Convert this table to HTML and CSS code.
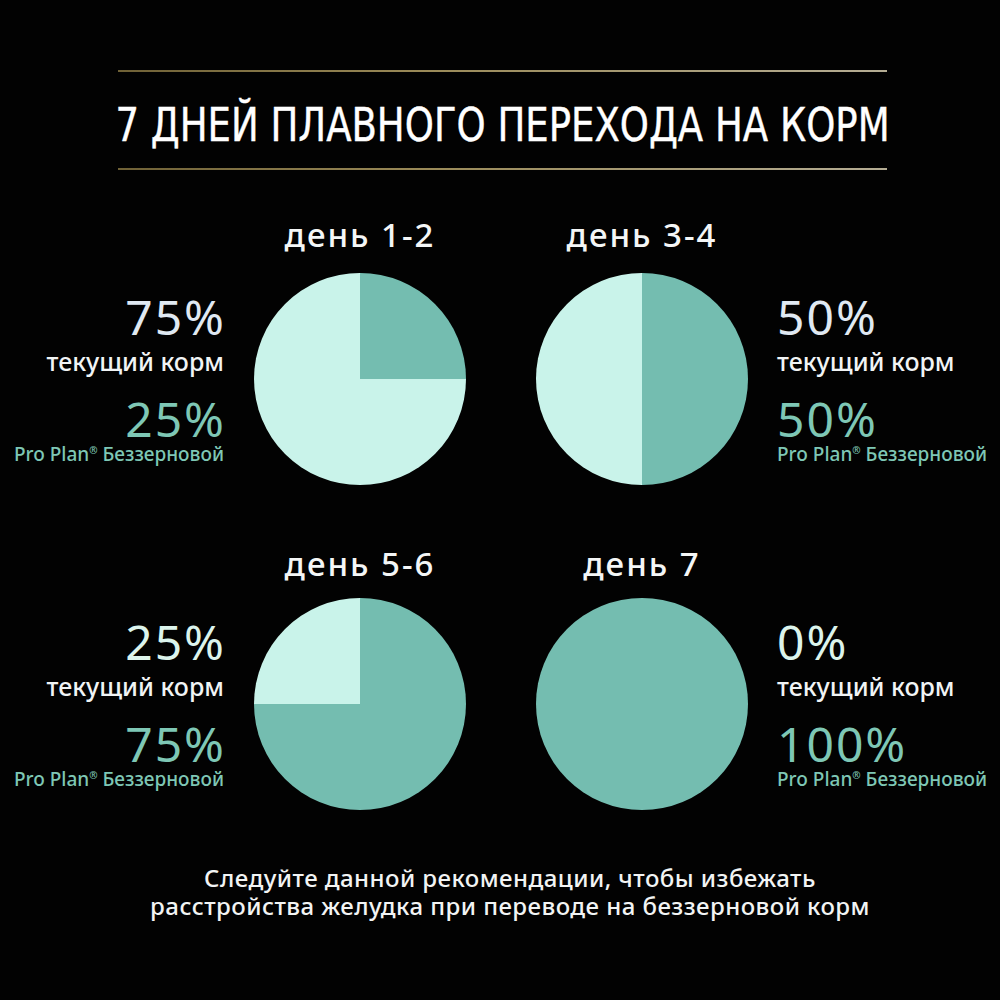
FILE: index.html
```html
<!DOCTYPE html>
<html lang="ru">
<head>
<meta charset="utf-8">
<link rel="stylesheet" href="styles.css">
</head>
<body>
<main class="page">
  <header class="header">
    <h1 class="title">7 ДНЕЙ ПЛАВНОГО ПЕРЕХОДА НА КОРМ</h1>
  </header>

  <section class="row row-first">
    <div class="label l1">день 1-2</div>
    <div class="label l2">день 3-4</div>
    <div class="info info-left t1">
      <div class="pct pct-cur">75%</div>
      <div class="cap-cur">текущий корм</div>
      <div class="pct pct-new">25%</div>
      <div class="cap-new">Pro Plan<sup>®</sup> Беззерновой</div>
    </div>
    <div class="pie p1" style="--p:25%"></div>
    <div class="pie p2" style="--p:50%"></div>
    <div class="info info-right t2">
      <div class="pct pct-cur">50%</div>
      <div class="cap-cur">текущий корм</div>
      <div class="pct pct-new">50%</div>
      <div class="cap-new">Pro Plan<sup>®</sup> Беззерновой</div>
    </div>
  </section>

  <section class="row row-second">
    <div class="label l1">день 5-6</div>
    <div class="label l2">день 7</div>
    <div class="info info-left t1">
      <div class="pct pct-cur alt">25%</div>
      <div class="cap-cur">текущий корм</div>
      <div class="pct pct-new">75%</div>
      <div class="cap-new">Pro Plan<sup>®</sup> Беззерновой</div>
    </div>
    <div class="pie p1" style="--p:75%"></div>
    <div class="pie p2" style="--p:100%"></div>
    <div class="info info-right t2">
      <div class="pct pct-cur alt">0%</div>
      <div class="cap-cur">текущий корм</div>
      <div class="pct pct-new">100%</div>
      <div class="cap-new">Pro Plan<sup>®</sup> Беззерновой</div>
    </div>
  </section>

  <p class="note">Следуйте данной рекомендации, чтобы избежать<br>расстройства желудка при переводе на беззерновой корм</p>
</main>
</body>
</html>
```

FILE: styles.css
```css
html, body {
  margin: 0;
  padding: 0;
  background: #020202;
}

.page {
  width: 1000px;
  height: 1000px;
  background: #020202;
  font-family: "Noto Sans", "Open Sans", sans-serif;
  color: #f2f5f6;
  padding-top: 70px;
  box-sizing: border-box;
  overflow: hidden;
}

.header {
  width: 769px;
  margin-left: 118px;
  border-top: 2px solid transparent;
  border-bottom: 2px solid transparent;
  border-image: linear-gradient(90deg, #6f6136 0%, #9a8a58 40%, #b5ad94 100%) 1;
  height: 86px;
  padding-top: 10px;
  box-sizing: content-box;
  display: flex;
  align-items: center;
  justify-content: center;
}

.title {
  margin: 0;
  font-family: "DejaVu Sans Condensed", "Noto Sans", sans-serif;
  font-weight: 400;
  font-size: 46px;
  line-height: 56px;
  color: #ffffff;
  white-space: nowrap;
  transform: scaleX(0.895);
  -webkit-text-stroke: 0.4px #ffffff;
}

.row {
  display: grid;
  grid-template-columns: 254px 212px 70px 212px 1fr;
  grid-template-rows: 36px 212px;
  grid-template-areas:
    ". l1 . l2 ."
    "t1 p1 . p2 t2";
  row-gap: 20px;
}

.row-first { margin-top: 47px; }
.row-second { margin-top: 61px; row-gap: 16px; }

.label {
  font-size: 33px;
  line-height: 36px;
  font-weight: 500;
  color: #f4f6f6;
  text-align: center;
  white-space: nowrap;
  letter-spacing: 2px;
}

.l1 { grid-area: l1; }
.l2 { grid-area: l2; }
.t1 { grid-area: t1; }
.t2 { grid-area: t2; }
.p1 { grid-area: p1; }
.p2 { grid-area: p2; }

.pie {
  width: 212px;
  height: 212px;
  border-radius: 50%;
  background: conic-gradient(#74bdb0 0 var(--p), #c9f3ea var(--p) 100%);
}

.info {
  align-self: center;
  display: flex;
  flex-direction: column;
  white-space: nowrap;
}

.info-left {
  align-items: flex-end;
  padding-right: 30px;
}

.info-right {
  align-items: flex-start;
  padding-left: 29px;
}

.pct {
  font-size: 48px;
  line-height: 48px;
  font-weight: 400;
  letter-spacing: 2px;
}

.info-left .pct { margin-right: -2px; }

.pct-cur { color: #e0e9f2; }
.pct-cur.alt { color: #dcf4ec; }
.pct-new { color: #7ec7b5; margin-top: 20px; }

.cap-cur {
  font-size: 25px;
  line-height: 28px;
  margin-top: 6px;
  font-weight: 500;
  color: #f1f4f5;
}

.cap-new {
  font-size: 19px;
  line-height: 22px;
  font-weight: 500;
  color: #7ec7b5;
}

.cap-new sup {
  font-size: 10px;
  vertical-align: 7px;
  line-height: 0;
}

.note {
  margin: 54px 0 0;
  padding-left: 20px;
  text-align: center;
  font-family: "Noto Sans", "Open Sans", sans-serif;
  font-size: 24px;
  line-height: 28px;
  font-weight: 500;
  letter-spacing: 0.45px;
  color: #f2f4f4;
}
```
